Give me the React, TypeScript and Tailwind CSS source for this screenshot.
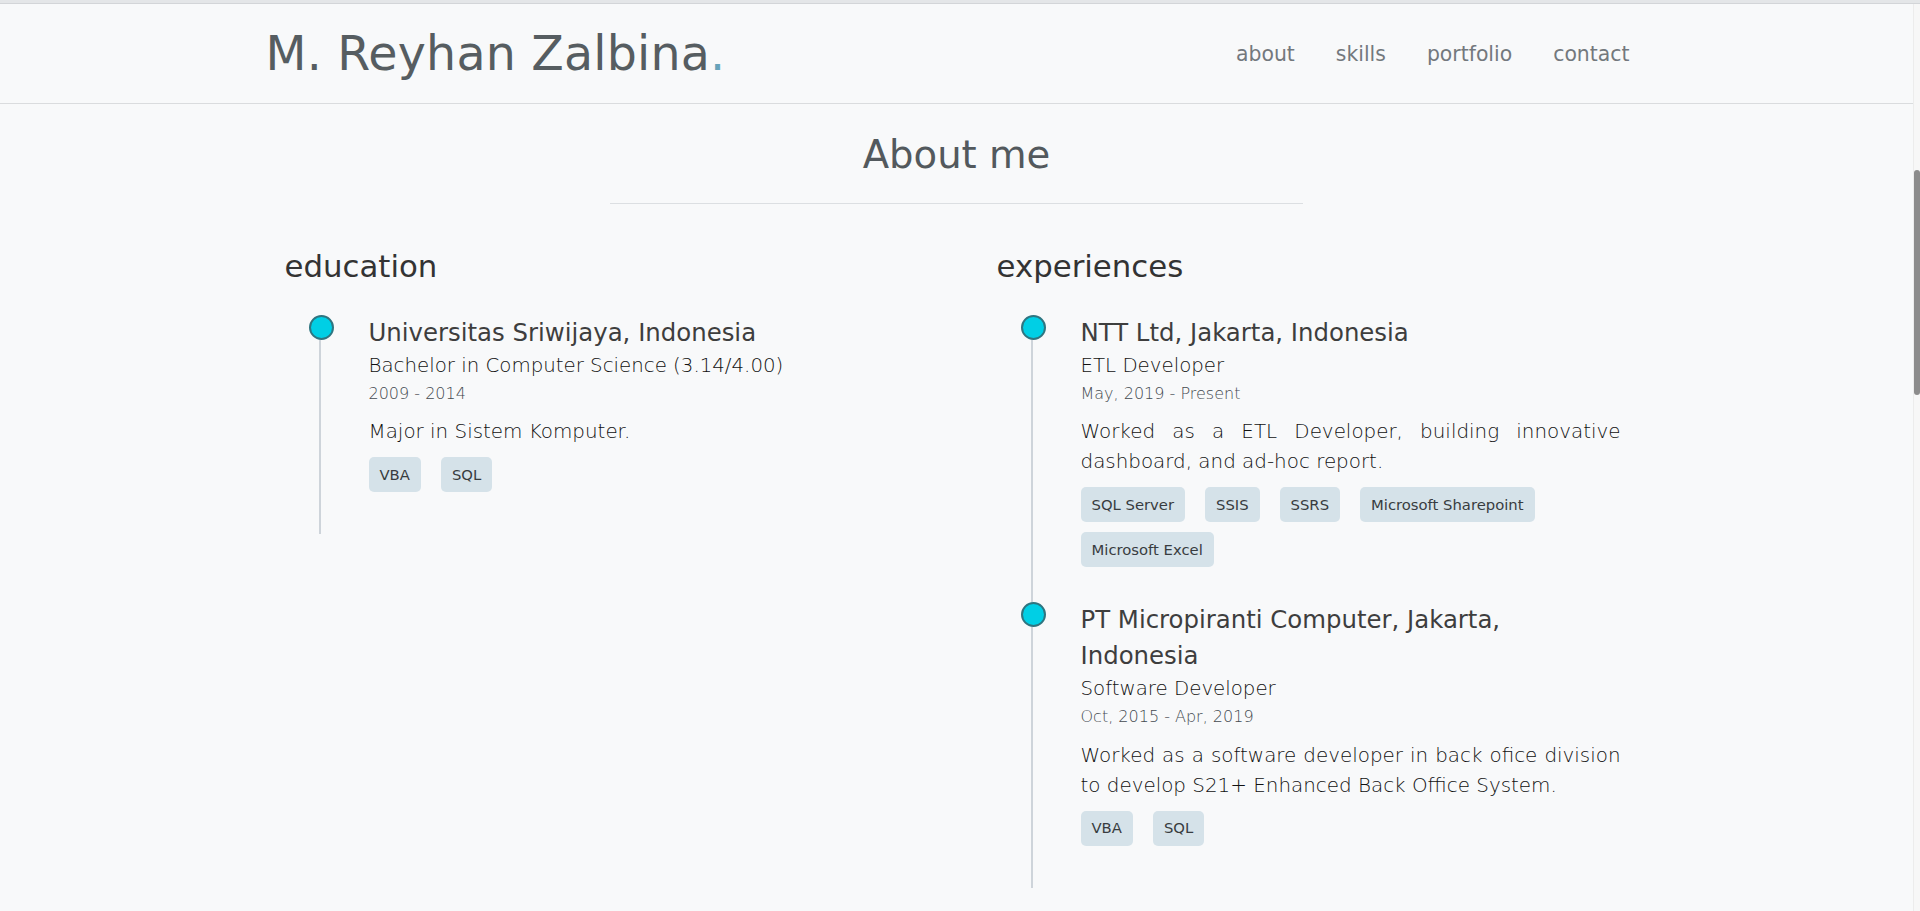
const education = [
  {
    title: "Universitas Sriwijaya, Indonesia",
    subtitle: "Bachelor in Computer Science (3.14/4.00)",
    date: "2009 - 2014",
    desc: "Major in Sistem Komputer.",
    tags: ["VBA", "SQL"],
  },
]

const experiences = [
  {
    title: "NTT Ltd, Jakarta, Indonesia",
    subtitle: "ETL Developer",
    date: "May, 2019 - Present",
    desc: "Worked as a ETL Developer, building innovative dashboard, and ad-hoc report.",
    tags: ["SQL Server", "SSIS", "SSRS", "Microsoft Sharepoint", "Microsoft Excel"],
  },
  {
    title: "PT Micropiranti Computer, Jakarta, Indonesia",
    subtitle: "Software Developer",
    date: "Oct, 2015 - Apr, 2019",
    desc: "Worked as a software developer in back ofice division to develop S21+ Enhanced Back Office System.",
    tags: ["VBA", "SQL"],
  },
]

type Item = (typeof experiences)[number]

function Timeline({ heading, items }: { heading: string; items: Item[] }) {
  return (
    <div className="pl-[40px]">
      <h3 className="text-[30.8px] leading-[40px] font-normal text-[#333333]">{heading}</h3>
      <div className="mt-[29px]">
        {items.map((it) => (
          <div key={it.title} className="flex group">
            {/* dot + line */}
            <div className="w-[84px] shrink-0 flex flex-col pl-[24px]">
              <div className="w-[25px] h-[25px] rounded-full bg-[#00cfe5] border-2 border-[#2f7580] shrink-0" />
              <div className="w-[2px] flex-1 ml-[10.5px] bg-[#ced4da]" />
            </div>
            <div className="w-[540px] pb-[35px] group-last:pb-[42px]">
              <p className="text-[24.4px] leading-[36px] text-[#3e3e3e]">{it.title}</p>
              <p className="text-[19.8px] leading-[30px] font-light text-[#111111]">{it.subtitle}</p>
              <p className="text-[16px] leading-[26.4px] font-light text-[#444a50]">{it.date}</p>
              <p className="mt-[10px] text-[19.9px] leading-[30px] font-light text-[#111111] text-justify">
                {it.desc}
              </p>
              <div className="mt-[10px] flex flex-wrap gap-x-[20px] gap-y-[10px]">
                {it.tags.map((t) => (
                  <span
                    key={t}
                    className="h-[35px] px-[11px] flex items-center rounded-[5px] bg-[#d5e2e9] text-[14.8px] text-[#383c40]"
                  >
                    {t}
                  </span>
                ))}
              </div>
            </div>
          </div>
        ))}
      </div>
    </div>
  )
}

export default function App() {
  return (
    <div className="h-[911px] overflow-hidden bg-[#f8f9fa] font-['DejaVu_Sans',sans-serif]">
      {/* browser top edge */}
      <div className="h-[4px] bg-[#e4e6e8] border-b border-[#d3d5d8]" />

      <div className="flex h-[907px]">
        <main className="flex-1 min-w-0">
          {/* Navbar */}
          <header className="h-[100px] border-b border-[#dadcde]">
            <div className="w-[1378px] mx-auto h-full flex items-center justify-between">
              <a href="#" className="-ml-[2px] text-[47.5px] leading-[57px] text-[#565d61] tracking-[0.2px]">
                M. Reyhan Zalbina<span className="text-[#68a3ba]">.</span>
              </a>
              <nav className="flex items-center gap-[41px] pr-[16px] text-[20.4px] leading-[30px] text-[#73787d]">
                <a href="#about">about</a>
                <a href="#skills">skills</a>
                <a href="#portfolio">portfolio</a>
                <a href="#contact">contact</a>
              </nav>
            </div>
          </header>

          {/* About */}
          <section id="about">
            <h1 className="mt-[21px] text-center text-[38.6px] leading-[60px] text-[#53595d]">About me</h1>
            <div className="mt-[18px] mx-auto w-[693px] h-px bg-[#dcdfe2]" />

            <div className="mt-[42px] w-[1424px] mx-auto grid grid-cols-2">
              <Timeline heading="education" items={education} />
              <Timeline heading="experiences" items={experiences} />
            </div>
          </section>
        </main>

        {/* scrollbar */}
        <div className="w-[7px] shrink-0 bg-[#f7f7f7] border-l border-[#ececec] pt-[166px]">
          <div className="h-[225px] w-[6px] rounded-[3px] bg-[#8c8c8c]" />
        </div>
      </div>
    </div>
  )
}
